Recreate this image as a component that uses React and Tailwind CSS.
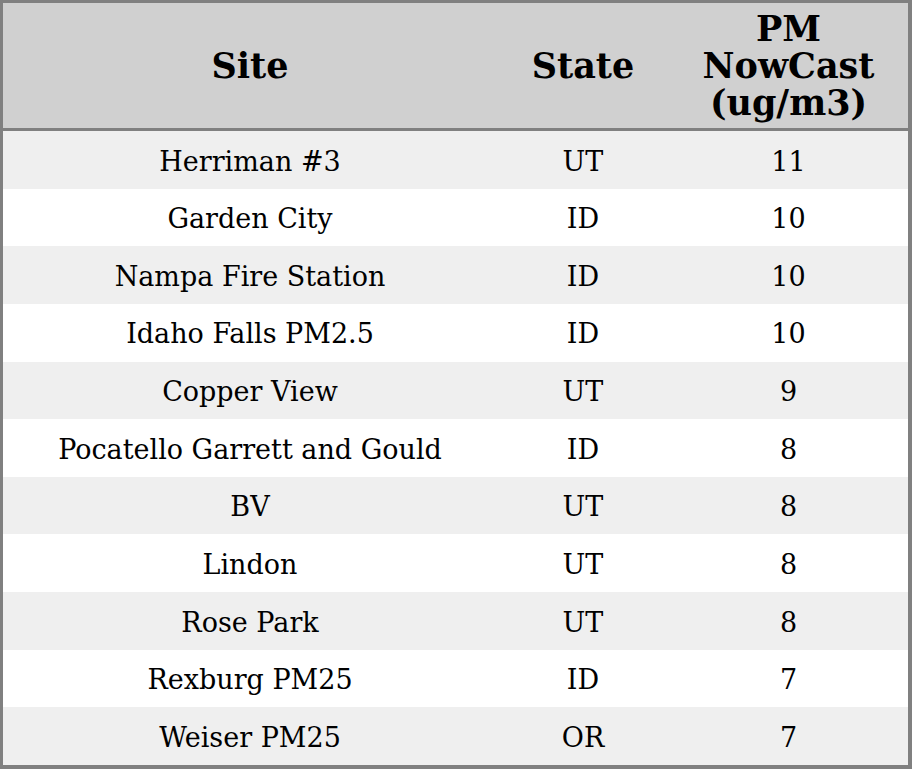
export default function App() {
  const rows = [
    ["Herriman #3", "UT", "11"],
    ["Garden City", "ID", "10"],
    ["Nampa Fire Station", "ID", "10"],
    ["Idaho Falls PM2.5", "ID", "10"],
    ["Copper View", "UT", "9"],
    ["Pocatello Garrett and Gould", "ID", "8"],
    ["BV", "UT", "8"],
    ["Lindon", "UT", "8"],
    ["Rose Park", "UT", "8"],
    ["Rexburg PM25", "ID", "7"],
    ["Weiser PM25", "OR", "7"],
  ];
  return (
    <div
      className="w-[912px] h-[769px] bg-white text-black"
      style={{ fontFamily: '"DejaVu Serif", serif' }}
    >
      <div className="w-[912px] h-[769px] border-t-[3px] border-l-[3px] border-r-[4px] border-b-[4px] border-[#808080] flex flex-col">
        <div className="grid grid-cols-[494px_172px_239px] h-[125px] bg-[#d0d0d0] border-b-[3px] border-[#808080] box-content font-bold text-[35px] leading-[37px]">
          <div className="flex items-center justify-center text-center">Site</div>
          <div className="flex items-center justify-center text-center">State</div>
          <div className="flex items-center justify-center text-center">
            PM
            <br />
            NowCast
            <br />
            (ug/m3)
          </div>
        </div>
        <div className="flex flex-col flex-1">
          {rows.map((r, i) => (
            <div
              key={i}
              className={`grid grid-cols-[494px_172px_239px] flex-1 pt-[4px] text-[27px] ${
                i % 2 === 0 ? "bg-[#efefef]" : "bg-white"
              }`}
            >
              <div className="flex items-center justify-center">{r[0]}</div>
              <div className="flex items-center justify-center">{r[1]}</div>
              <div className="flex items-center justify-center">{r[2]}</div>
            </div>
          ))}
        </div>
      </div>
    </div>
  );
}
